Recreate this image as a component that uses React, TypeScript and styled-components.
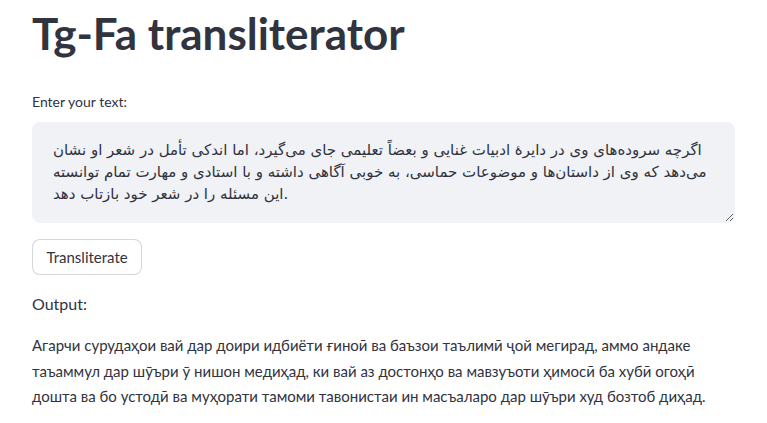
import * as React from "react";
import styled, { createGlobalStyle } from "styled-components";

const GlobalStyle = createGlobalStyle`
  html, body {
    margin: 0;
    padding: 0;
    background: #ffffff;
  }
  body {
    font-family: Lato, "DejaVu Sans", sans-serif;
    color: rgb(49, 51, 63);
  }
`;

const Main = styled.main`
  display: flex;
  flex-direction: column;
  padding: 7px 32px 0 32px;
  width: 100%;
  box-sizing: border-box;
`;

const Title = styled.h1`
  font-family: Lato, sans-serif;
  font-size: 44px;
  font-weight: 700;
  line-height: 1.2;
  margin: 0 0 32px 0;
`;

const Label = styled.label`
  font-size: 14px;
  line-height: 20px;
  margin-bottom: 10px;
`;

const TextArea = styled.textarea`
  box-sizing: border-box;
  width: 100%;
  height: 101px;
  padding: 16px 14px 16px 20px;
  background-color: rgb(240, 242, 246);
  border: 1px solid rgb(240, 242, 246);
  border-radius: 8px;
  color: rgb(49, 51, 63);
  font-family: "DejaVu Sans", sans-serif;
  font-size: 15px;
  line-height: 22px;
  outline: none;
  resize: vertical;
  white-space: pre;
  overflow: hidden;
`;

const Button = styled.button`
  align-self: flex-start;
  margin-top: 16px;
  height: 36px;
  padding: 0 13.5px;
  background: #ffffff;
  border: 1px solid rgba(49, 51, 63, 0.2);
  border-radius: 8px;
  color: rgb(49, 51, 63);
  font-family: Lato, sans-serif;
  font-size: 15px;
  cursor: pointer;
`;

const Heading = styled.p`
  font-size: 16px;
  line-height: 25.6px;
  margin: 16px 0 0 0;
`;

const Output = styled.p`
  font-size: 15px;
  line-height: 25.3px;
  margin: 17px 0 0 0;
`;

const source =
  "اگرچه سروده‌های وی در دایرهٔ ادبیات غنایی و بعضاً تعلیمی جای می‌گیرد، اما اندکی تأمل در شعر او نشان\nمی‌دهد که وی از داستان‌ها و موضوعات حماسی، به خوبی آگاهی داشته و با استادی و مهارت تمام توانسته\nاین مسئله را در شعر خود بازتاب دهد.";

const result = [
  "Агарчи сурудаҳои вай дар доири идбиёти ғиноӣ ва баъзои таълимӣ ҷой мегирад, аммо андаке",
  "таъаммул дар шӯъри ӯ нишон медиҳад, ки вай аз достонҳо ва мавзуъоти ҳимосӣ ба хубӣ огоҳӣ",
  "дошта ва бо устодӣ ва муҳорати тамоми тавонистаи ин масъаларо дар шӯъри худ бозтоб диҳад.",
];

export default function App() {
  return (
    <>
      <GlobalStyle />
      <Main>
        <Title>Tg-Fa transliterator</Title>
        <Label>Enter your text:</Label>
        <TextArea defaultValue={source} />
        <Button>Transliterate</Button>
        <Heading>Output:</Heading>
        <Output>
          {result.map((line, i) => (
            <React.Fragment key={i}>
              {line}
              {i < result.length - 1 && <br />}
            </React.Fragment>
          ))}
        </Output>
      </Main>
    </>
  );
}
